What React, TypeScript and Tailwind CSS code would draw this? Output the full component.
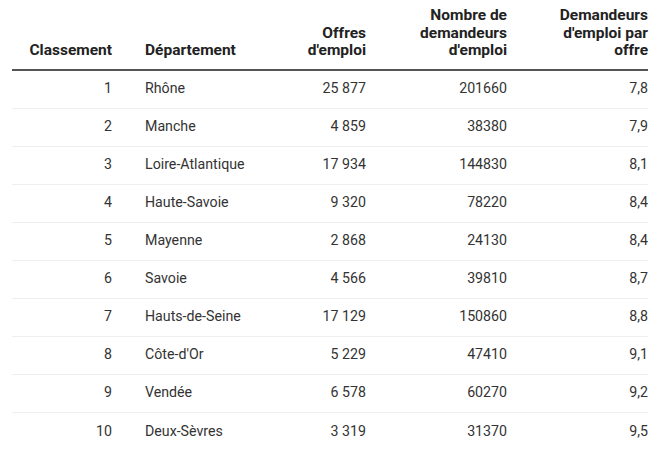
import React from "react";

const rows: [number, string, string, string, string][] = [
  [1, "Rhône", "25 877", "201660", "7,8"],
  [2, "Manche", "4 859", "38380", "7,9"],
  [3, "Loire-Atlantique", "17 934", "144830", "8,1"],
  [4, "Haute-Savoie", "9 320", "78220", "8,4"],
  [5, "Mayenne", "2 868", "24130", "8,4"],
  [6, "Savoie", "4 566", "39810", "8,7"],
  [7, "Hauts-de-Seine", "17 129", "150860", "8,8"],
  [8, "Côte-d'Or", "5 229", "47410", "9,1"],
  [9, "Vendée", "6 578", "60270", "9,2"],
  [10, "Deux-Sèvres", "3 319", "31370", "9,5"],
];

export default function App() {
  return (
    <div
      className="w-[660px] h-[460px] bg-white px-3 text-[14.2px] text-[#333]"
      style={{ fontFamily: "Roboto, 'Liberation Sans', sans-serif" }}
    >
      <div className="grid grid-cols-[100px_154px_100px_141px_141px] items-end pt-[7px] pb-[9px] border-b-2 border-[#555] font-bold text-[15.5px] text-[#222] leading-[17.5px]">
        <div className="text-right">Classement</div>
        <div className="pl-[33px]">Département</div>
        <div className="text-right">
          Offres
          <br />
          d'emploi
        </div>
        <div className="text-right">
          Nombre de
          <br />
          demandeurs
          <br />
          d'emploi
        </div>
        <div className="text-right">
          Demandeurs
          <br />
          d'emploi par
          <br />
          offre
        </div>
      </div>
      {rows.map((r, i) => (
        <div
          key={r[0]}
          className={
            "grid grid-cols-[100px_154px_100px_141px_141px] items-center h-[38px] " +
            (i < rows.length - 1 ? "border-b border-[#eeeeee]" : "")
          }
        >
          <div className="text-right">{r[0]}</div>
          <div className="pl-[33px]">{r[1]}</div>
          <div className="text-right">{r[2]}</div>
          <div className="text-right">{r[3]}</div>
          <div className="text-right">{r[4]}</div>
        </div>
      ))}
    </div>
  );
}
